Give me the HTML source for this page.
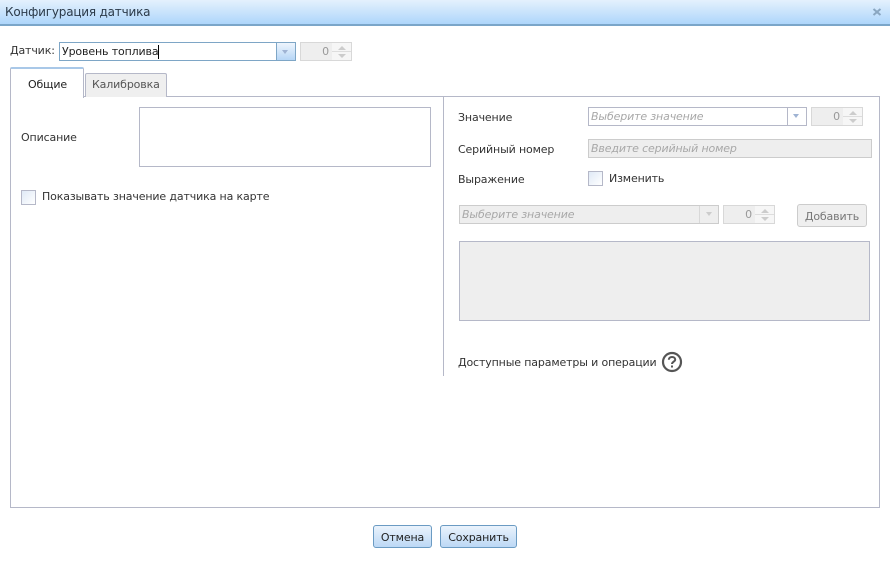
<!DOCTYPE html>
<html><head><meta charset="utf-8">
<style>
html,body{margin:0;padding:0;background:#fff}
body{width:890px;height:573px;overflow:hidden;position:relative;font-family:"DejaVu Sans","Liberation Sans",sans-serif;font-size:11px;color:#333;letter-spacing:-.14px}
.a{position:absolute;box-sizing:border-box}
.t{position:absolute;white-space:nowrap;line-height:14px}
.i{font-style:italic;color:#a8a8a8}
.dis{background:#eee;border:1px solid #ccc}
.sp{position:absolute;box-sizing:border-box;background:#eee;border:1px solid #d8d8d8;height:19px;text-align:right;line-height:17px;color:#999;padding-right:22px}
.sb{position:absolute;right:0;top:0;width:19px;height:17px;background:#f6f6f6}
.up,.dn{position:absolute;right:5px;width:0;height:0;border-left:4px solid transparent;border-right:4px solid transparent}
.up{top:3px;border-bottom:4px solid #ccc}
.dn{bottom:2px;border-top:4px solid #ccc}
.ln{position:absolute;right:0;width:19px;top:8px;height:1px;background:#ddd}
.cb{position:absolute;box-sizing:border-box;width:15px;height:15px;border:1px solid #b5b8c8;background:linear-gradient(135deg,#dfe9f6,#fff)}
.btn{position:absolute;box-sizing:border-box;border-radius:3px;text-align:center;white-space:nowrap}
.b1{border:1px solid #6b9bc3;background:linear-gradient(#eaf3fc,#bcd8f5);height:23px;line-height:23px;color:#222}
.arr{position:absolute;width:0;height:0;border-left:3.5px solid transparent;border-right:3.5px solid transparent;border-top:4px solid #9fb3d3}
</style></head><body>
<div class="a" style="left:0;top:0;width:890px;height:26px;background:linear-gradient(#e4f1fd,#aed6fb);border-bottom:2px solid #7ba6c9"></div>
<div class="t" style="left:5px;top:5px;font-size:12px;color:#2b3a49;letter-spacing:-.2px">Конфигурация датчика</div>
<svg class="a" style="left:872px;top:7px" width="10" height="10" viewBox="0 0 10 10"><path d="M1.5 2L8.5 8M8.5 2L1.5 8" stroke="#8aa6c0" stroke-width="2" fill="none"/></svg>

<div class="t" style="left:10px;top:44px">Датчик:</div>
<div class="a" style="left:59px;top:42px;width:237px;height:19px;border:1px solid #7ea6c6;background:#fff"></div>
<div class="t" style="left:62px;top:45px;color:#222">Уровень топлива</div>
<div class="a" style="left:158px;top:45px;width:1px;height:14px;background:#000"></div>
<div class="a" style="left:276px;top:43px;width:19px;height:17px;border-left:1px solid #7ea6c6;background:linear-gradient(#eef5fd,#b6d6f6)"></div>
<div class="arr" style="left:282px;top:50px"></div>
<div class="sp" style="left:300px;top:42px;width:52px">0<span class="sb"></span><span class="ln"></span><span class="up"></span><span class="dn"></span></div>

<div class="a" style="left:10px;top:96px;width:870px;height:412px;border:1px solid #b5b8c8"></div>
<div class="a" style="left:10px;top:67px;width:74px;height:31px;border:1px solid #b5b8c8;border-top:2px solid #a9c8e8;border-bottom:none;background:#fff;border-radius:2px 2px 0 0"></div>
<div class="t" style="left:28px;top:78px;color:#222">Общие</div>
<div class="a" style="left:85px;top:73px;width:82px;height:24px;border:1px solid #b5b8c8;border-bottom:none;background:#efefef;border-radius:2px 2px 0 0"></div>
<div class="t" style="left:92px;top:78px;color:#555">Калибровка</div>

<div class="t" style="left:21px;top:131px">Описание</div>
<div class="a" style="left:139px;top:107px;width:292px;height:60px;border:1px solid #b5b8c8;background:#fff"></div>
<div class="cb" style="left:21px;top:190px"></div>
<div class="t" style="left:42px;top:190px">Показывать значение датчика на карте</div>

<div class="a" style="left:443px;top:97px;width:1px;height:279px;background:#b5b8c8"></div>

<div class="t" style="left:458px;top:111px">Значение</div>
<div class="a" style="left:588px;top:107px;width:219px;height:19px;border:1px solid #b5b8c8;background:#fff"></div>
<div class="t i" style="left:591px;top:110px">Выберите значение</div>
<div class="a" style="left:787px;top:108px;width:19px;height:17px;border-left:1px solid #b5b8c8;background:#fff"></div>
<div class="arr" style="left:793px;top:114px"></div>
<div class="sp" style="left:811px;top:107px;width:52px">0<span class="sb"></span><span class="ln"></span><span class="up"></span><span class="dn"></span></div>

<div class="t" style="left:458px;top:143px">Серийный номер</div>
<div class="a dis" style="left:588px;top:139px;width:284px;height:19px"></div>
<div class="t i" style="left:591px;top:142px">Введите серийный номер</div>

<div class="t" style="left:458px;top:173px">Выражение</div>
<div class="cb" style="left:588px;top:171px"></div>
<div class="t" style="left:609px;top:172px">Изменить</div>

<div class="a dis" style="left:459px;top:205px;width:260px;height:19px"></div>
<div class="t i" style="left:462px;top:208px">Выберите значение</div>
<div class="a" style="left:699px;top:206px;width:1px;height:17px;background:#d8d8d8"></div>
<div class="arr" style="left:706px;top:212px;border-top-color:#ccc"></div>
<div class="sp" style="left:723px;top:205px;width:52px">0<span class="sb"></span><span class="ln"></span><span class="up"></span><span class="dn"></span></div>
<div class="btn" style="left:797px;top:204px;width:70px;height:23px;line-height:23px;border:1px solid #ccc;background:#efefef;color:#777">Добавить</div>

<div class="a" style="left:459px;top:241px;width:411px;height:80px;border:1px solid #b5b8c8;background:#eee"></div>

<div class="t" style="left:458px;top:356px">Доступные параметры и операции</div>
<svg class="a" style="left:661px;top:351px" width="22" height="22" viewBox="0 0 22 22"><circle cx="11" cy="11" r="9" fill="none" stroke="#555" stroke-width="2.2"/><path d="M7.8 8.8C7.8 6.8 9.3 6 11 6C12.8 6 14.2 7 14.2 8.6C14.2 10.6 11 10.8 11 13" fill="none" stroke="#555" stroke-width="2"/><rect x="10" y="14.5" width="2" height="2" fill="#555"/></svg>

<div class="btn b1" style="left:373px;top:525px;width:59px">Отмена</div>
<div class="btn b1" style="left:440px;top:525px;width:77px">Сохранить</div>
</body></html>
